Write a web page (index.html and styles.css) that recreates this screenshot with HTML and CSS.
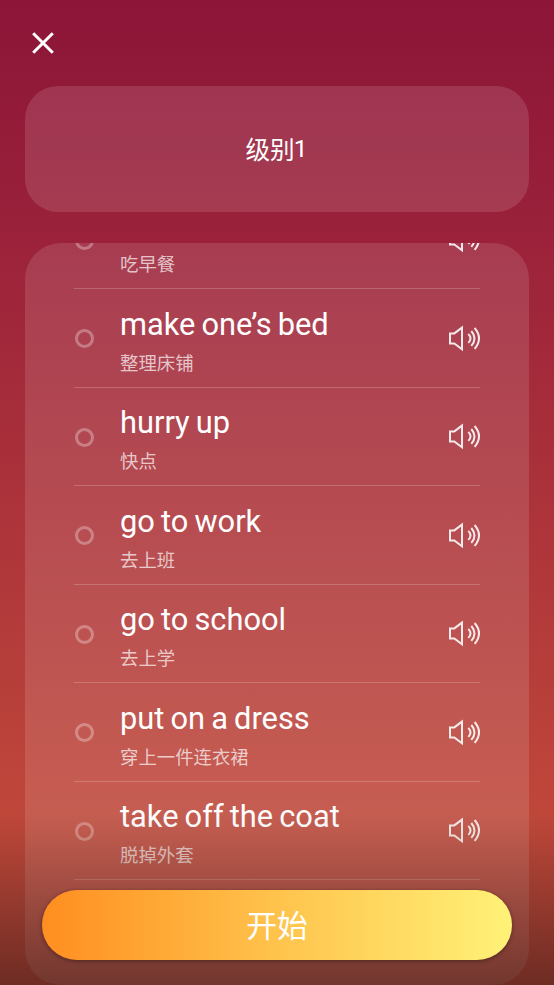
FILE: index.html
```html
<!DOCTYPE html>
<html lang="zh-CN">
<head>
<meta charset="utf-8">
<title>级别1</title>
<link rel="stylesheet" href="styles.css">
</head>
<body>
<svg width="0" height="0" class="defs" aria-hidden="true">
  <symbol id="speaker" viewBox="0 0 34 28">
    <path d="M3 8.4H7.3L15 2.6V24.2L7.3 18.5H3Z"/>
    <path d="M21.3 8.9Q25.7 13.4 21.3 17.9M24.3 6Q30.7 13.4 24.3 20.8M27.6 3Q36.4 13.4 27.6 23.8"/>
  </symbol>
</svg>
<div class="screen">
  <header class="topbar">
    <svg class="close" viewBox="0 0 22 22"><path d="M1.2 1.2L20.8 20.8M20.8 1.2L1.2 20.8"/></svg>
  </header>
  <section class="level">级别<span class="digit">1</span></section>
  <main class="panel">
    <ul class="list">
      <li class="row"><i class="dot"></i><div class="words"><b></b><span>吃早餐</span></div><svg class="speaker"><use href="#speaker"/></svg></li>
      <li class="row"><i class="dot"></i><div class="words"><b>make one’s bed</b><span>整理床铺</span></div><svg class="speaker"><use href="#speaker"/></svg></li>
      <li class="row"><i class="dot"></i><div class="words"><b>hurry up</b><span>快点</span></div><svg class="speaker"><use href="#speaker"/></svg></li>
      <li class="row"><i class="dot"></i><div class="words"><b>go to work</b><span>去上班</span></div><svg class="speaker"><use href="#speaker"/></svg></li>
      <li class="row"><i class="dot"></i><div class="words"><b>go to school</b><span>去上学</span></div><svg class="speaker"><use href="#speaker"/></svg></li>
      <li class="row"><i class="dot"></i><div class="words"><b>put on a dress</b><span>穿上一件连衣裙</span></div><svg class="speaker"><use href="#speaker"/></svg></li>
      <li class="row"><i class="dot"></i><div class="words"><b>take off the coat</b><span>脱掉外套</span></div><svg class="speaker"><use href="#speaker"/></svg></li>
    </ul>
  </main>
  <footer class="footer"><button class="start">开始</button></footer>
</div>
</body>
</html>
```
FILE: styles.css
```css
* { box-sizing: border-box; }

body {
  margin: 0;
  font-family: Roboto, "Noto Sans CJK SC", sans-serif;
  color: #fff;
}

.defs { position: absolute; }

.screen {
  position: relative;
  height: 985px;
  overflow: hidden;
  padding: 0 25px;
  background: linear-gradient(#8c1538 0, #9b223a 240px, #c0483a 830px, #c0483a 100%);
}

.topbar {
  height: 86px;
  padding: 32px 0 0 7px;
}

.close {
  display: block;
  width: 22px;
  height: 22px;
  fill: none;
  stroke: #fff;
  stroke-width: 3;
}

.level {
  display: flex;
  align-items: center;
  justify-content: center;
  height: 126px;
  padding: 0 1px 2px 0;
  border-radius: 33px;
  background: rgba(255, 255, 255, .12);
  font-size: 24.6px;
}

.digit {
  margin-left: -1px;
  padding-top: 1px;
}

.panel {
  height: 742px;
  margin-top: 30.5px;
  padding: 0 49px;
  overflow: hidden;
  border-radius: 36px;
  background: rgba(255, 255, 255, .12);
}

.list {
  margin: -52px 0 0;
  padding: 0;
  list-style: none;
}

.row {
  display: flex;
  align-items: center;
  height: 98.5px;
  padding-top: 1.5px;
  border-bottom: 1.5px solid rgba(255, 255, 255, .2);
}

.dot {
  width: 19px;
  height: 19px;
  margin: 0 26px 0 1px;
  border: 3px solid rgba(255, 255, 255, .3);
  border-radius: 50%;
}

.words {
  display: flex;
  flex: 1;
  flex-direction: column;
  padding-top: 7px;
}

.words b {
  height: 42px;
  font-size: 30.8px;
  font-weight: 400;
  line-height: 42px;
  word-spacing: -1.5px;
}

.words span {
  font-size: 18.4px;
  line-height: 35px;
  color: rgba(255, 255, 255, .7);
}

.speaker {
  width: 34px;
  height: 28px;
  margin-right: -1px;
  fill: none;
  stroke: rgba(255, 255, 255, .88);
  stroke-width: 2;
}

.footer {
  position: absolute;
  inset: auto 0 0;
  height: 173px;
  padding: 78px 42px 25px;
  background: linear-gradient(rgba(28, 16, 12, 0), rgba(28, 16, 12, .5));
}

.start {
  display: block;
  width: 100%;
  height: 70px;
  padding: 3px 0 0;
  border: 0;
  border-radius: 35px;
  background: linear-gradient(90deg, #ff8e20, #ffc34c 50%, #fff278);
  box-shadow: 0 1px 4px rgba(0, 0, 0, .4);
  color: #fff;
  font: 30.8px/67px Roboto, "Noto Sans CJK SC", sans-serif;
}
```
